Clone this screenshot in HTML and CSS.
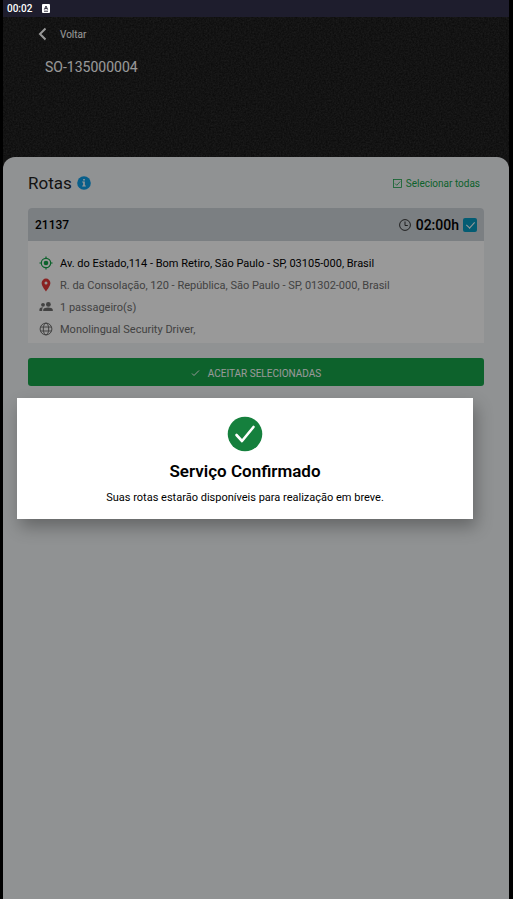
FILE: index.html
```html
<!DOCTYPE html>
<html lang="pt-BR">
<head>
  <meta charset="UTF-8">
  <meta name="viewport" content="width=device-width, initial-scale=1">
  <title>Rotas</title>
  <link rel="stylesheet" href="styles.css">
</head>
<body>

  <div class="status-bar">
    <span>00:02</span>
    <svg width="8" height="9" viewBox="0 0 8 9">
      <rect width="8" height="9" rx="1" fill="#fff"/>
      <path d="M2.3 5.6 4 2l1.7 3.6M2.9 4.6h2.2M2 7.2h4" fill="none" stroke="#1e1d2d" stroke-width="0.9"/>
    </svg>
  </div>

  <div class="app">
    <header class="top">
      <svg class="grain" width="100%" height="100%">
        <filter id="grain" color-interpolation-filters="sRGB">
          <feTurbulence type="fractalNoise" baseFrequency="0.6" numOctaves="3" seed="4"/>
          <feColorMatrix type="matrix" values="0.5 0 0 0 -0.12  0.5 0 0 0 -0.12  0.5 0 0 0 -0.12  0 0 0 0 0.3"/>
        </filter>
        <rect width="100%" height="100%" filter="url(#grain)"/>
      </svg>
      <a class="back" href="#">
        <svg width="9" height="14" viewBox="0 0 9 14">
          <path d="M7.500 1.500 2 7l5.500 5.500" fill="none" stroke="currentColor" stroke-width="2"/>
        </svg>
        Voltar
      </a>
      <h1 class="order">SO-135000004</h1>
    </header>

    <main class="panel">
      <div class="panel-head">
        <h2>Rotas</h2>
        <svg width="14" height="14" viewBox="0 0 14 14">
          <circle cx="7" cy="7" r="6.8" fill="#0e9fe8"/>
          <path d="M6.2 3h1.6v1.5H6.2zM5.2 5.6h2.6v3.9h1v1H5.2v-1h1V6.6h-1z" fill="#fff"/>
        </svg>
        <button class="select-all" type="button">
          <svg width="9" height="9" viewBox="0 0 9 9" fill="none" stroke="currentColor" stroke-width="0.8">
            <rect x="0.5" y="0.5" width="8" height="8"/>
            <path d="m2 4.500 1.800 1.800L7.200 2.500"/>
          </svg>
          Selecionar todas
        </button>
      </div>

      <section class="route">
        <div class="route-head">
          <label for="route-21137">21137</label>
          <div class="time">
            <svg width="12" height="12" viewBox="0 0 12 12" fill="none" stroke="currentColor">
              <circle cx="6" cy="6" r="5.4"/>
              <path d="M6 2.500v4h2.800"/>
            </svg>
            <span>02:00h</span>
          </div>
          <input type="checkbox" id="route-21137" checked>
        </div>
        <ul class="route-info">
          <li class="origin">
            <svg width="14" height="14" viewBox="0 0 14 14" fill="none" stroke="#16a34a">
              <circle cx="7" cy="7" r="4.7" stroke-width="1.2"/>
              <circle cx="7" cy="7" r="2.3" fill="#16a34a" stroke="none"/>
              <path d="M7 .4v2M7 11.6v2M.4 7h2M11.6 7h2" stroke-width="1.2"/>
            </svg>
            Av. do Estado,114 - Bom Retiro, São Paulo - SP, 03105-000, Brasil
          </li>
          <li class="destination">
            <svg width="14" height="14" viewBox="0 0 14 14">
              <path d="M7 .6a4.4 4.4 0 0 0-4.4 4.4c0 3.2 4.4 8.4 4.4 8.4s4.4-5.2 4.4-8.4A4.4 4.4 0 0 0 7 .6zm0 2.9a1.5 1.5 0 1 1 0 3 1.5 1.5 0 0 1 0-3z" fill="#e53939" fill-rule="evenodd"/>
            </svg>
            R. da Consolação, 120 - República, São Paulo - SP, 01302-000, Brasil
          </li>
          <li>
            <svg width="14" height="14" viewBox="0 0 14 14" fill="currentColor">
              <circle cx="4" cy="4.8" r="1.9"/>
              <circle cx="9.400" cy="4.400" r="2.400"/>
              <path d="M.4 11V9.600c0-1.500 1.700-2.300 3.600-2.300-.5.600-.8 1.400-.8 2.300V11zM4.200 11V9.700c0-1.600 2.700-2.300 4.900-2.300s4.700.7 4.700 2.300V11z"/>
            </svg>
            1 passageiro(s)
          </li>
          <li>
            <svg width="14" height="14" viewBox="0 0 14 14" fill="none" stroke="currentColor">
              <circle cx="7" cy="7" r="5.900"/>
              <ellipse cx="7" cy="7" rx="2.700" ry="5.900"/>
              <path d="M1.500 5h11M1.500 9h11"/>
            </svg>
            Monolingual Security Driver,
          </li>
        </ul>
      </section>

      <button class="accept" type="button">
        <svg width="9" height="8" viewBox="0 0 9 8">
          <path d="m1 4.500 2 2L8 1.500" fill="none" stroke="currentColor"/>
        </svg>
        ACEITAR SELECIONADAS
      </button>
    </main>

    <div class="overlay">
      <div class="dialog" role="dialog" aria-labelledby="dialog-title">
        <svg width="36" height="36" viewBox="0 0 36 36">
          <circle cx="18" cy="18" r="17.300" fill="#15803d"/>
          <path d="m9.500 19 5.500 6L26.500 11" fill="none" stroke="#fff" stroke-width="2.600" stroke-linecap="round" stroke-linejoin="round"/>
        </svg>
        <h3 id="dialog-title">Serviço Confirmado</h3>
        <p>Suas rotas estarão disponíveis para realização em breve.</p>
      </div>
    </div>
  </div>

</body>
</html>
```

FILE: styles.css
```css
* { margin: 0; padding: 0; box-sizing: border-box; }
body {
  min-height: 100vh;
  padding: 0 4px 0 3px;
  background: #000;
  font-family: Roboto, sans-serif;
  font-size: 11px;
  display: flex;
  flex-direction: column;
}
button {
  border: none;
  background: none;
  font-family: inherit;
  cursor: pointer;
}
svg { flex-shrink: 0; }
.status-bar {
  display: flex;
  align-items: center;
  gap: 10px;
  height: 17px;
  padding: 0 4px;
  background: #1e1d2d;
  color: #fff;
  font-size: 10px;
  font-weight: 500;
}
.app {
  position: relative;
  flex: 1;
  display: flex;
  flex-direction: column;
  background: #212121;
}
.top {
  position: relative;
  height: 140px;
  padding: 10px 35px;
  color: #fff;
}
.grain {
  position: absolute;
  top: 0;
  left: 0;
}
.back {
  position: relative;
  display: flex;
  align-items: center;
  gap: 13px;
  height: 14px;
  color: #fff;
  font-size: 10px;
  text-decoration: none;
}
.order {
  position: relative;
  padding: 16px 7px;
  font-size: 14px;
  font-weight: 400;
  line-height: 20px;
}
.panel {
  flex: 1;
  padding: 16px 25px;
  background: #f1f3f6;
  border-radius: 12px 12px 0 0;
}
.panel-head {
  display: flex;
  align-items: center;
  gap: 5px;
  height: 20px;
  margin-bottom: 15px;
}
.panel-head h2 {
  color: #222;
  font-size: 17px;
  font-weight: 450;
}
.select-all {
  display: flex;
  align-items: center;
  gap: 4px;
  margin-left: auto;
  padding-right: 4px;
  color: #16a34a;
  font-size: 10px;
  font-weight: 450;
}
.route {
  background: #fff;
  border-radius: 4px 4px 0 0;
}
.route-head {
  display: flex;
  align-items: center;
  gap: 4px;
  height: 33px;
  padding: 0 7px;
  background: #cdd4d9;
  border-radius: 4px 4px 0 0;
}
.route-head label {
  flex: 1;
  font-size: 12px;
  font-weight: 500;
}
.time {
  display: flex;
  align-items: center;
  gap: 5px;
  color: #333;
}
.time span {
  color: #000;
  font-size: 14px;
  font-weight: 500;
}
.route-head input {
  appearance: none;
  display: flex;
  justify-content: center;
  width: 14px;
  height: 14px;
  background: #fff;
  border-radius: 2px;
}
.route-head input:checked { background: #0699c0; }
.route-head input:checked::after {
  content: "";
  width: 4px;
  height: 7px;
  margin-top: 2px;
  border: solid #fff;
  border-width: 0 1px 1px 0;
  transform: rotate(42deg);
}
.route-info {
  padding: 11px 11px 3px;
  list-style: none;
  color: #6e6e6e;
}
.route-info li {
  display: flex;
  align-items: center;
  gap: 7px;
  min-height: 22px;
}
.route-info .origin {
  color: #000;
  font-weight: 450;
}
.route-info .destination { font-weight: 450; }
.accept {
  display: flex;
  justify-content: center;
  align-items: center;
  gap: 8px;
  width: 100%;
  height: 28px;
  margin-top: 15px;
  padding-top: 2px;
  background: #16a34a;
  border-radius: 3px;
  color: #fff;
  font-size: 10px;
}
/* dims the page behind the dialog */
.overlay {
  position: absolute;
  top: 0; left: 0;
  width: 100%;
  height: 100%;
  padding: 0 36px 0 14px;
  background: rgba(0, 0, 0, 0.4);
  display: flex;
  align-items: center;
}
.dialog {
  flex: 1;
  display: flex;
  flex-direction: column;
  align-items: center;
  padding: 18px 16px 14px;
  background: #fff;
  box-shadow: 3px 8px 16px rgba(0, 0, 0, 0.3);
  text-align: center;
}
.dialog h3 {
  margin: 8px 0;
  font-size: 17px;
  font-weight: 600;
  line-height: 22px;
}
.dialog p { line-height: 15px; }
```
